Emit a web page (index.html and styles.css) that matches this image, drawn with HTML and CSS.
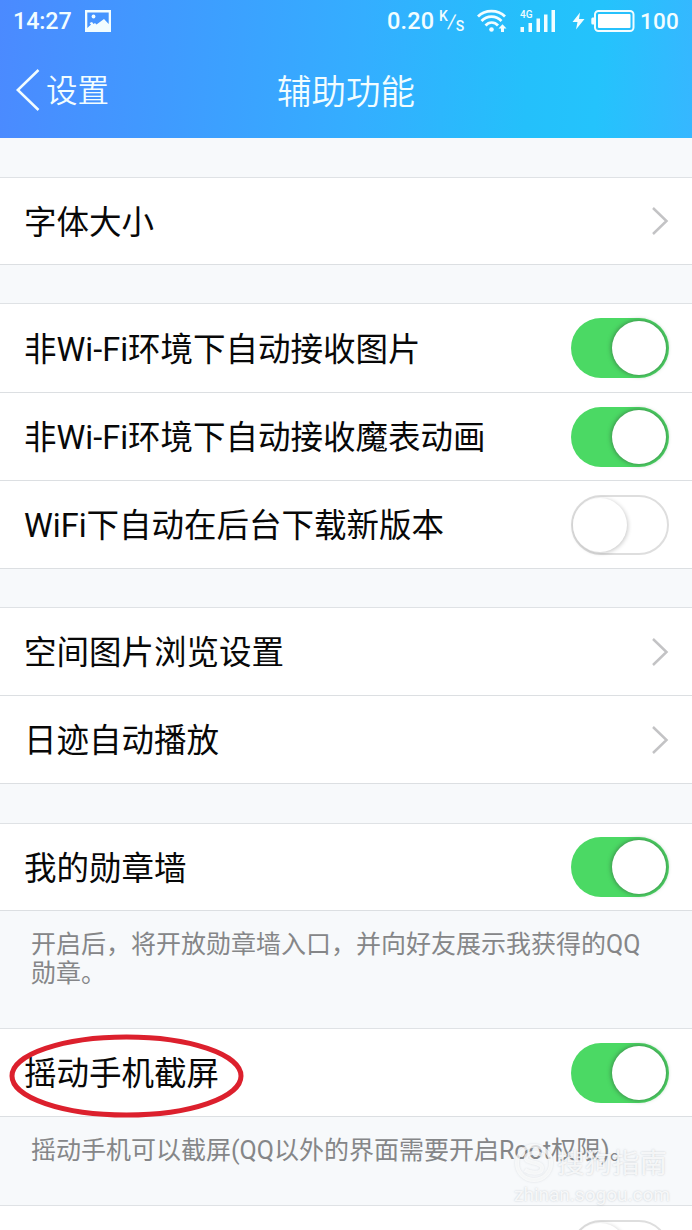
FILE: index.html
```
<!DOCTYPE html>
<html lang="zh-CN">
<head>
<meta charset="utf-8">
<title>辅助功能</title>
<link rel="stylesheet" href="styles.css">
</head>
<body>
<div class="screen">
  <header class="header">
    <div class="status">
      <span class="time">14:27</span>
      <svg class="pic" width="26" height="22" viewBox="0 0 26 22"><path fill="#f2fdff" fill-rule="evenodd" d="M0 0H26V22H0ZM2.300 2.500V18L6 14.500L4.500 13L7 12L8.500 14L10 13L11.500 14.500L19 9L23.700 14V2.500Z"/><circle cx="8.500" cy="6.500" r="1.900" fill="#f2fdff"/></svg>
      <span class="speed">0.20</span>
      <span class="unit"><sup>K</sup><i>/</i><sub>S</sub></span>
      <svg class="wifi" width="30" height="24" viewBox="0 0 30 24" fill="none" stroke="#f2fdff" stroke-width="2.700"><path d="M1 7.500C8 .2 21 .2 28 7.500M4.500 12C10 6.200 19 6.200 24.500 12M8.500 16.500C12 12.500 17.500 12.500 21 16.500"/><circle cx="14.500" cy="20.500" r="2.300" fill="#f2fdff" stroke="none"/><path d="M25.500 15.200L29.500 19.500H27V23H24V19.500H21.500Z" fill="#f2fdff" stroke="none"/></svg>
      <svg class="signal" width="36" height="24" viewBox="0 0 36 24" fill="#f2fdff"><text x="0" y="8.500" class="lte">4G</text><path d="M.5 18H4V23H.5ZM8.500 14H12V23H8.500ZM16.500 9.500H20V23H16.500ZM24 5.500H27.500V23H24ZM31.500 1H35V23H31.500Z"/></svg>
      <svg class="bolt" width="13" height="18" viewBox="0 0 13 18"><path d="M8 .5L.5 10H5.500L4 17.500L12.500 7H7Z" fill="#f2fdff"/></svg>
      <svg class="battery" width="44" height="22" viewBox="0 0 44 22"><rect x="4" y="1" width="38.500" height="20" rx="3.500" fill="none" stroke="#f2fdff" stroke-width="2"/><rect x="7" y="4" width="32.500" height="14" rx="1" fill="#fff"/><path d="M3 7.500H1.500Q.3 7.500 .3 9V13Q.3 14.500 1.500 14.500H3Z" fill="#f2fdff"/></svg>
      <span class="percent">100</span>
    </div>
    <div class="nav">
      <div class="back">
        <svg width="24" height="42" viewBox="0 0 24 42"><path d="M22.500 1L1.800 21L22.500 41" fill="none" stroke="#f2fdff" stroke-width="2.500"/></svg>
        <span>设置</span>
      </div>
      <h1 class="title">辅助功能</h1>
    </div>
  </header>

  <section class="group first">
    <div class="row short"><span>字体大小</span><svg class="chev" viewBox="0 0 18 30"><path d="M2 2L15.500 15L2 28"/></svg></div>
  </section>
  <section class="group">
    <div class="row long"><span>非Wi-Fi环境下自动接收图片</span><div class="switch on"><b></b></div></div>
    <div class="row"><span>非Wi-Fi环境下自动接收魔表动画</span><div class="switch on"><b></b></div></div>
    <div class="row"><span>WiFi下自动在后台下载新版本</span><div class="switch"><b></b></div></div>
  </section>
  <section class="group">
    <div class="row"><span>空间图片浏览设置</span><svg class="chev" viewBox="0 0 18 30"><path d="M2 2L15.500 15L2 28"/></svg></div>
    <div class="row"><span>日迹自动播放</span><svg class="chev" viewBox="0 0 18 30"><path d="M2 2L15.500 15L2 28"/></svg></div>
  </section>
  <section class="group late">
    <div class="row short"><span>我的勋章墙</span><div class="switch on"><b></b></div></div>
  </section>
  <p class="note tall">开启后，将开放勋章墙入口，并向好友展示我获得的QQ<br>勋章。</p>
  <section class="group flush">
    <div class="row marked"><span>摇动手机截屏</span><div class="switch on"><b></b></div>
      <svg class="ring" width="236" height="86" viewBox="0 0 236 86"><ellipse cx="117.500" cy="43" rx="114.500" ry="39"/></svg>
    </div>
  </section>
  <p class="note">摇动手机可以截屏(QQ以外的界面需要开启Root权限)。</p>
  <section class="group flush">
    <div class="row"><span></span><div class="switch"><b></b></div></div>
  </section>

  <div class="watermark">
    <div class="brand">
      <svg width="40" height="40" viewBox="0 0 40 40"><circle cx="20" cy="20" r="17"/><path d="M28 12C22 8 12 10 12 15C12 21 28 18 28 25C28 31 17 31 11 27"/></svg>
      <span>搜狗指南</span>
    </div>
    <div class="site">zhinan.sogou.com</div>
  </div>
</div>
</body>
</html>
```
FILE: styles.css
```
* { box-sizing: border-box; }
body { margin: 0; font-family: Roboto, "Noto Sans CJK SC", sans-serif; }
.screen { position: relative; width: 692px; height: 1230px; overflow: hidden; background: #f7f9fb; }

.header { height: 138px; color: #f2fdff; background: linear-gradient(94deg, #4b8aff 0%, #3f9bff 25%, #34aeff 52%, #24c0fb 76%, #24c3fc 86%, #36b7ff 100%); }
.status { height: 42px; display: flex; align-items: center; padding-left: 13px; line-height: 42px; font-weight: 500; }
.time { width: 72px; white-space: nowrap; font-size: 23.300px; letter-spacing: -.1px; }
.speed { margin-left: 276px; width: 52px; font-size: 23.500px; letter-spacing: .2px; }
.unit { display: flex; width: 26px; height: 26px; }
.unit sup { font-size: 14px; line-height: 16px; }
.unit i { font-size: 19px; line-height: 28px; font-style: normal; font-weight: 400; transform: skewX(-8deg); }
.unit sub { font-size: 14px; line-height: 36px; }
.wifi { margin-left: 12px; }
.signal { margin-left: 13px; }
.lte { font: 500 10px Roboto, sans-serif; }
.bolt { margin-left: 16px; }
.battery { margin-left: 6px; }
.percent { margin-left: 5px; font-size: 22.500px; letter-spacing: .2px; }
.pic, .wifi, .signal, .bolt, .battery { flex: none; }

.nav { height: 96px; display: grid; grid-template-columns: 1fr auto 1fr; align-items: center; }
.back { display: flex; align-items: center; gap: 6px; padding-left: 16px; font-size: 31.500px; font-weight: 350; line-height: 40px; }
.back span { padding-top: 3px; }
.title { margin: 0; padding-top: 3px; font-size: 34.500px; font-weight: 350; line-height: 40px; }

.group { margin-top: 38px; border-top: 1px solid #dfe2e5; background: #fff; }
.group.first { margin-top: 39px; }
.group.late { margin-top: 39px; }
.group.flush { margin-top: 0; }
.row { height: 88px; display: flex; align-items: center; justify-content: space-between; padding: 0 23px 0 24px; border-bottom: 1px solid #dcdfe2; color: #080808; font-size: 32.500px; line-height: 40px; white-space: nowrap; }
.row.short { height: 87px; }
.row.long { height: 89px; }
.row > span { padding-top: 3px; }
.chev { width: 18px; height: 30px; fill: none; stroke: #c3c3c5; stroke-width: 2.500; }

.switch { width: 98px; height: 60px; padding: 3px; border-radius: 30px; background: #fff; border: 2.500px solid #dedede; display: flex; align-items: center; }
.switch b { width: 54px; height: 54px; flex: none; margin-left: -3px; border-radius: 50%; background: #fff; box-shadow: 1px 1px 4px rgba(0,0,0,.22); }
.switch.on { background: #4bd964; border: 0; justify-content: flex-end; }
.switch.on b { margin: 0; box-shadow: 0 0 4px 1px rgba(55,105,65,.65); }

.note { margin: 0; height: 88px; padding: 20px 0 0 31px; color: #858688; font-size: 25px; line-height: 28.500px; white-space: nowrap; }
.note.tall { height: 117px; }
.marked { position: relative; }
.ring { position: absolute; left: 9px; top: 4px; z-index: 1; overflow: visible; }
.ring ellipse { fill: none; stroke: #dc202d; stroke-width: 5; }

.watermark { position: absolute; left: 514px; top: 1142px; width: 158px; color: rgba(255,255,255,.8); text-shadow: 0 0 2px rgba(125,135,145,.4); }
.brand { display: flex; align-items: center; gap: 3px; height: 41px; font-size: 27.500px; line-height: 42px; white-space: nowrap; }
.brand span { padding-top: 3px; }
.brand svg { flex: none; fill: none; stroke: rgba(255,255,255,.7); stroke-width: 4; filter: drop-shadow(0 0 1px rgba(125,135,145,.3)); }
.site { font-size: 19px; line-height: 24px; white-space: nowrap; }
```
